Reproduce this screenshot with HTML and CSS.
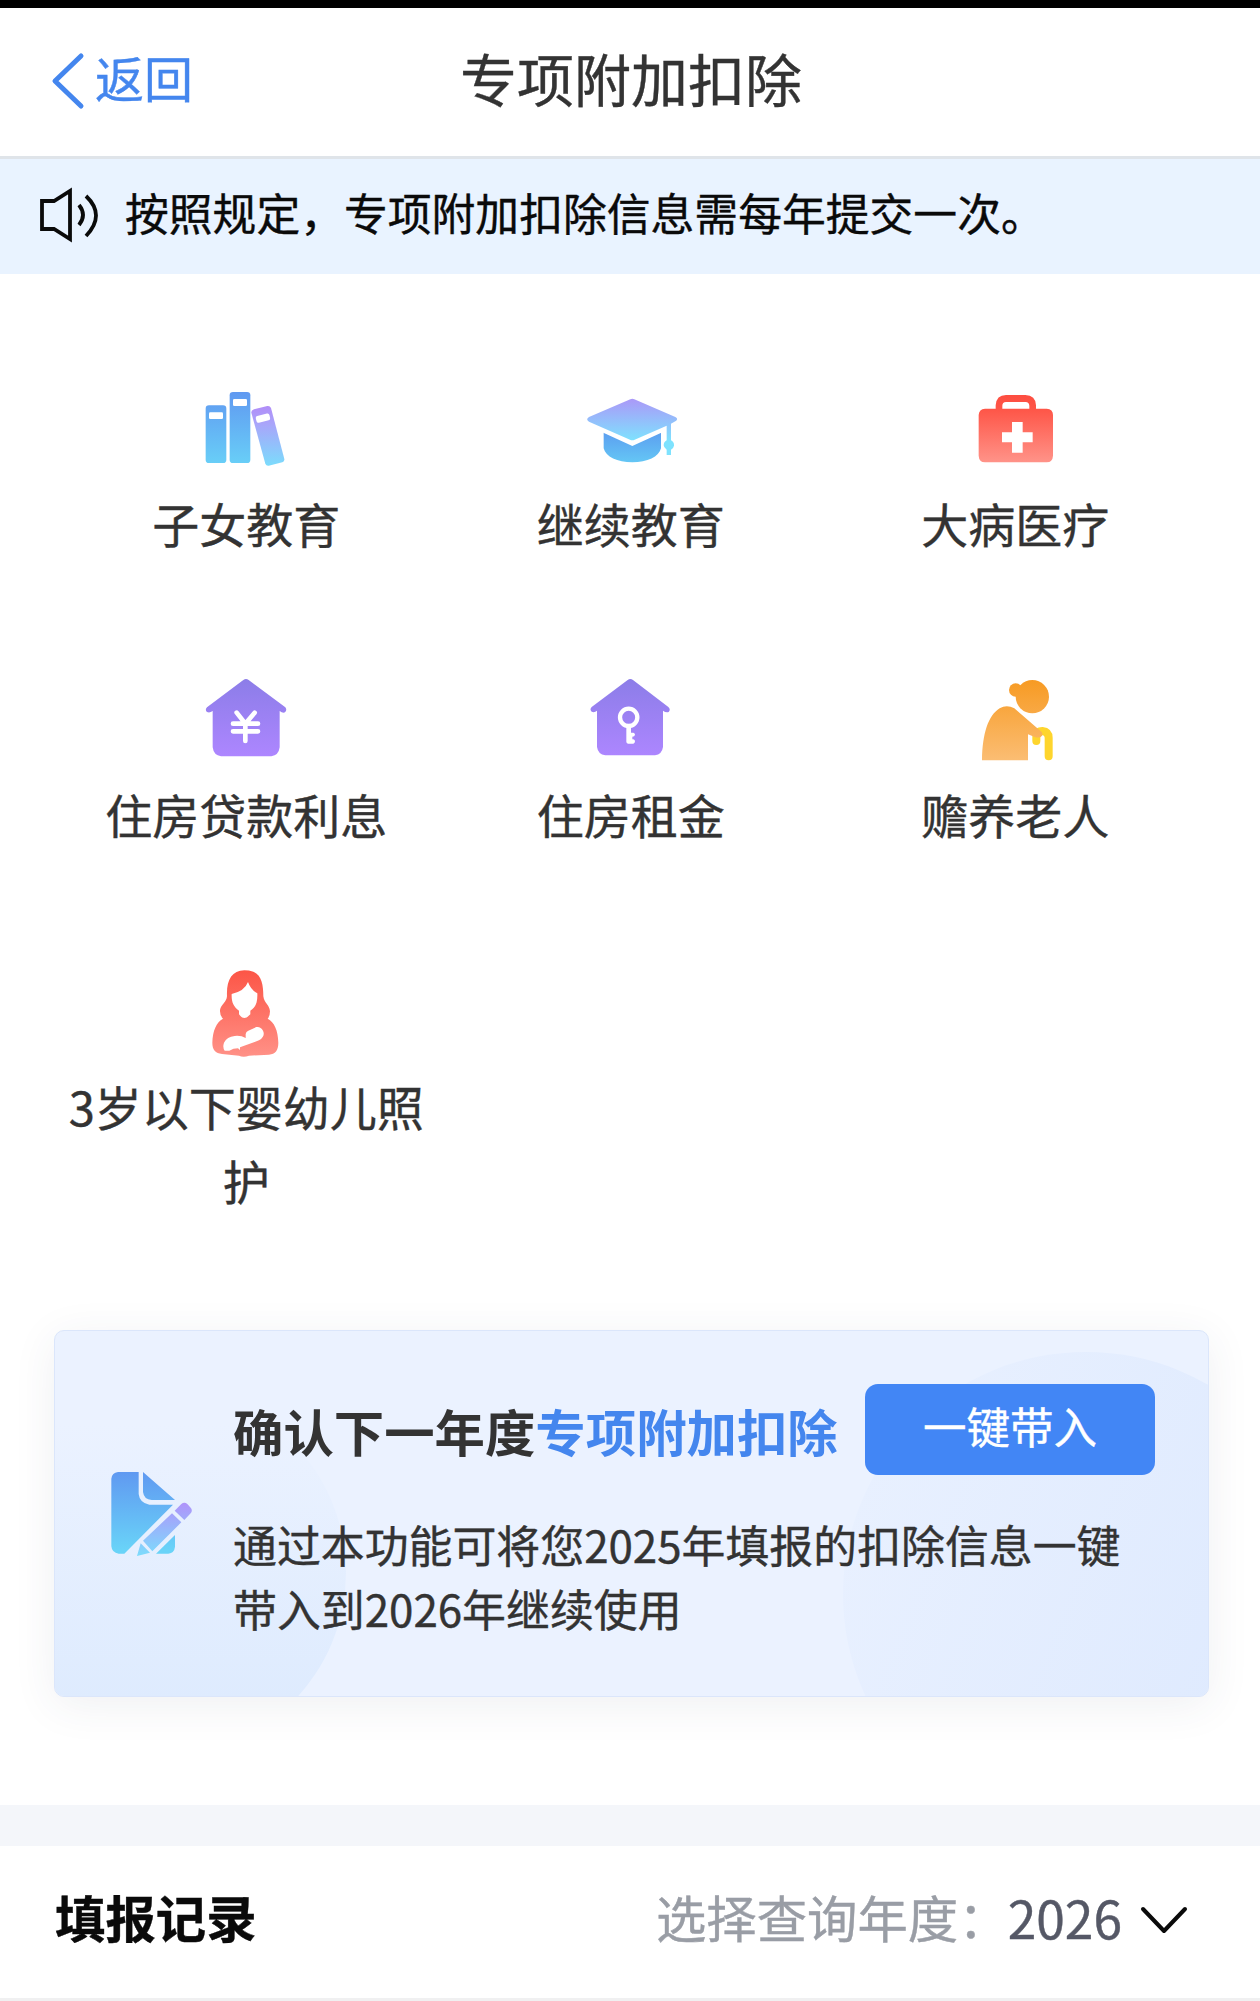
FILE: index.html
```html
<!DOCTYPE html>
<html lang="zh-CN">
<head>
<meta charset="utf-8">
<title>专项附加扣除</title>
<link rel="stylesheet" href="styles.css">
</head>
<body>
<svg class="defs" width="0" height="0" aria-hidden="true">
  <defs>
    <linearGradient id="sky" gradientUnits="userSpaceOnUse" x1="0" y1="66" x2="0" y2="300"><stop offset="0" stop-color="#6099f1"/><stop offset="1" stop-color="#69d3f8"/></linearGradient>
    <linearGradient id="lilac" gradientUnits="userSpaceOnUse" x1="0" y1="108" x2="0" y2="288"><stop offset="0" stop-color="#b18df8"/><stop offset=".3" stop-color="#a9a5fa"/><stop offset="1" stop-color="#7bdcfc"/></linearGradient>
    <linearGradient id="cap" gradientUnits="userSpaceOnUse" x1="0" y1="86" x2="0" y2="212"><stop offset="0" stop-color="#ab98f8"/><stop offset="1" stop-color="#7ee2fe"/></linearGradient>
    <linearGradient id="capBase" gradientUnits="userSpaceOnUse" x1="0" y1="186" x2="0" y2="276"><stop offset="0" stop-color="#5c9ef0"/><stop offset="1" stop-color="#64c6f5"/></linearGradient>
    <linearGradient id="red" gradientUnits="userSpaceOnUse" x1="0" y1="70" x2="0" y2="290"><stop offset="0" stop-color="#fd4c3f"/><stop offset=".22" stop-color="#fe5648"/><stop offset="1" stop-color="#ff988e"/></linearGradient>
    <linearGradient id="rose" gradientUnits="userSpaceOnUse" x1="0" y1="60" x2="0" y2="320"><stop offset="0" stop-color="#fc5546"/><stop offset="1" stop-color="#ff9187"/></linearGradient>
    <linearGradient id="violet" gradientUnits="userSpaceOnUse" x1="0" y1="56" x2="0" y2="288"><stop offset="0" stop-color="#8c7de8"/><stop offset="1" stop-color="#ad86ff"/></linearGradient>
    <linearGradient id="amber" gradientUnits="userSpaceOnUse" x1="0" y1="56" x2="0" y2="300"><stop offset="0" stop-color="#f79a22"/><stop offset="1" stop-color="#fbbd73"/></linearGradient>
    <linearGradient id="pen" gradientUnits="userSpaceOnUse" x1="0" y1="158" x2="0" y2="318"><stop offset="0" stop-color="#b093fa"/><stop offset="1" stop-color="#7cdcfc"/></linearGradient>
    <linearGradient id="fadeDown" x1="0" y1="0" x2="0" y2="1"><stop offset=".1" stop-color="#deebfe" stop-opacity="0"/><stop offset=".85" stop-color="#deebfe"/></linearGradient>
    <linearGradient id="fadeSide" x1="0" y1=".3" x2="1" y2=".7"><stop offset="0" stop-color="#dde9fe" stop-opacity=".2"/><stop offset="1" stop-color="#dde9fe"/></linearGradient>
  </defs>
</svg>

<div class="status-bar"></div>
<header class="nav">
  <a class="back"><svg width="36" height="60" viewBox="0 0 36 60"><path d="M31 5 5 30 31 55"/></svg><span>返回</span></a>
  <h1>专项附加扣除</h1>
</header>

<div class="notice">
  <svg width="62" height="56" viewBox="0 0 62 56"><path d="M3 14H15L31 4V52L15 42H3Z"/><path d="M40 18Q48 28 40 38M47 9Q67 28 47 49"/></svg>
  <span>按照规定，专项附加扣除信息需每年提交一次。</span>
</div>

<main>
  <section class="grid">
    <div class="item">
      <svg class="icon" viewBox="3 0 390 360">
        <g fill="url(#sky)"><rect x="77" y="106" width="62" height="173" rx="10"/><rect x="149" y="66" width="62" height="213" rx="10"/></g>
        <path fill="url(#lilac)" d="M222 118 262 108Q270 107 273 114L313 267Q314 274 307 277L266 287Q259 288 256 281L214 128Q213 121 222 118Z"/>
        <g fill="#fff"><rect x="87" y="127" width="42" height="20" rx="4"/><rect x="159" y="87" width="42" height="21" rx="4"/><rect x="228" y="134" width="42" height="21" rx="6" transform="rotate(-14 249 145)"/></g>
      </svg>
      <span>子女教育</span>
    </div>
    <div class="item">
      <svg class="icon" viewBox="-12 0 390 360">
        <path fill="url(#capBase)" d="M101 186 188 222 273 186V235C267 261 232 277 187 277S107 261 101 235Z"/>
        <path fill="none" stroke="#fff" stroke-width="20" d="M101 178 187 217 273 178"/>
        <path fill="url(#cap)" d="M181 88Q187 85 193 88L316 141Q327 147 316 154L303 161V211Q313 216 312 227Q311 234 303 239V255H290V239Q281 233 281 226Q281 216 290 211V167L194 209Q187 212 180 209L57 155Q46 148 57 141Z"/>
      </svg>
      <span>继续教育</span>
    </div>
    <div class="item">
      <svg class="icon" viewBox="0 0 390 360">
        <path fill="url(#red)" fill-rule="evenodd" d="M105 116H137V106Q139 75 168 75H226Q257 76 258 106V116H290Q309 117 309 135V257Q308 276 290 277H105Q87 276 86 257V135Q87 117 105 116ZM157 116H238V107Q237 96 227 96H168Q157 97 157 107ZM186 156V187H156V217H186V248H218V217H248V187H218V156Z"/>
      </svg>
      <span>大病医疗</span>
    </div>
    <div class="item">
      <svg class="icon" viewBox="3 5 390 360">
        <path fill="url(#violet)" d="M190 59Q198 53 206 59L316 141Q322 149 315 156Q308 159 299 152V261Q296 285 274 288H123Q101 285 98 261V152Q89 159 81 155Q74 148 81 141Z"/>
        <path class="cut" d="M170 157 196 190 224 157M196 190V242M159 190H234M159 213H234"/>
      </svg>
      <span>住房贷款利息</span>
    </div>
    <div class="item">
      <svg class="icon" viewBox="-12 5 390 360">
        <path fill="url(#violet)" d="M173 59Q181 53 189 59L295 140Q303 148 296 155Q288 158 279 151V260Q276 282 255 285H106Q84 282 81 260V151Q73 158 65 154Q58 147 65 140Z"/>
        <circle class="cut thin" cx="176" cy="171" r="26"/><path fill="#fff" d="M169 198H183V217H190Q195 218 195 223Q194 229 187 229V237H190Q195 238 195 243Q195 249 190 250H174Q169 249 169 244Z"/>
      </svg>
      <span>住房租金</span>
    </div>
    <div class="item">
      <svg class="icon" viewBox="0 5 390 360">
        <path fill="none" stroke="#fed52d" stroke-width="24" stroke-linecap="round" d="M259 242V224Q262 212 277 212Q296 214 296 233V288"/>
        <g fill="url(#amber)"><circle cx="247" cy="109" r="50"/><circle cx="197" cy="89" r="20"/><path d="M96 300C97 219 115 165 149 144Q170 132 193 144L275 215Q281 224 272 230Q264 233 254 230L234 222V300Z"/></g>
      </svg>
      <span>赡养老人</span>
    </div>
    <div class="item">
      <svg class="icon" viewBox="3 9 390 360">
        <path fill="url(#rose)" d="M193 61Q207 61 220 65C245 75 250 105 250 139C253 160 269 165 270 184Q270 198 263 206C283 216 294 241 295 278C295 301 286 312 267 314L207 317Q190 323 177 317L126 312C106 309 97 300 97 278C98 242 109 217 129 206Q119 196 120 180C123 163 140 157 141 138C139 91 155 62 193 61Z"/>
        <path fill="#fff" d="M204 96Q212 119 232 130C233 157 227 172 211 182V193Q202 204 193 204T177 193V182C160 171 154 155 155 132Q194 123 204 96ZM197 264V252Q198 245 205 242L229 231Q242 229 249 242Q254 253 248 261Q244 268 237 271L180 292V300L174 295Q160 295 148 302H134Q127 292 132 278Q141 260 164 258Q183 256 197 264Z"/>
      </svg>
      <span>3岁以下婴幼儿照护</span>
    </div>
  </section>

  <section class="card">
    <svg class="card-bg" viewBox="0 0 1153 366" preserveAspectRatio="none"><circle cx="106" cy="242" r="185" fill="url(#fadeDown)"/><circle cx="1031" cy="264" r="243" fill="url(#fadeSide)"/></svg>
    <svg class="card-icon" viewBox="54 54 270 276">
      <path fill="url(#sky)" d="M84 66H146V132Q149 159 178 164H249L103 311H86Q66 309 64 289V86Q66 68 84 66ZM159 66 255 150H185Q162 149 159 126ZM255 255V290Q253 309 235 311H198Z"/>
      <path fill="url(#pen)" d="M274 162Q283 155 292 162L302 173Q309 181 302 190L283 210 254 182ZM246 190 274 217 187 304 159 272ZM152 280 180 308 141 318Z"/>
    </svg>
    <div class="card-body">
      <div class="card-head"><h2>确认下一年度<em>专项附加扣除</em></h2><button type="button">一键带入</button></div>
      <p>通过本功能可将您2025年填报的扣除信息一键带入到2026年继续使用</p>
    </div>
  </section>
</main>

<section class="records">
  <h2>填报记录</h2>
  <div class="year"><span class="hint">选择查询年度：</span><span class="value">2026</span><svg width="50" height="32" viewBox="0 0 50 32"><path d="M4 4 25 26 46 4"/></svg></div>
</section>
</body>
</html>
```

FILE: styles.css
```css
* { box-sizing: border-box; }
body {
  margin: 0;
  background: #fff;
  color: #333;
  font-family: "Noto Sans CJK SC", "Noto Sans", sans-serif;
  -webkit-text-stroke: .4px;
}
h1, h2, p { margin: 0; font-weight: 400; }
svg { display: block; flex: none; }
.defs { position: absolute; }
.status-bar { height: 8px; background: #000; }

.nav {
  display: grid;
  grid-template-columns: 1fr auto 1fr;
  align-items: center;
  height: 151px;
  padding: 0 0 11px 50px;
  border-bottom: 3px solid #dfe4e9;
}
.nav h1 { font-size: 57px; line-height: 80px; margin-left: -48px; }
.back { display: flex; align-items: center; gap: 9px; color: #4486ee; font-size: 49px; line-height: 70px; }
.back svg { margin-top: 9px; }
.back path { fill: none; stroke: #4486ee; stroke-width: 5; stroke-linecap: round; stroke-linejoin: round; }

.notice {
  display: flex;
  align-items: center;
  gap: 24px;
  height: 115px;
  padding: 0 0 9px 39px;
  background: #e9f3ff;
  color: #0a0a0a;
  font-size: 43.8px;
  line-height: 64px;
}
.notice svg { margin-top: 5px; }
.notice path { fill: none; stroke: #0a0a0a; stroke-width: 3.8; }

.grid {
  display: grid;
  grid-template-columns: repeat(3, 384.5px);
  grid-auto-rows: 291.5px;
  height: 960px;
  padding: 0 54px;
  margin-top: 96px;
}
.item { display: flex; flex-direction: column; align-items: center; font-size: 47px; line-height: 74px; text-align: center; }
.item span { width: 370px; margin-top: -4.5px; }
.icon { width: 130px; height: 120px; }
.cut { fill: none; stroke: #fff; stroke-width: 14; stroke-linecap: round; stroke-linejoin: round; }
.cut.thin { stroke-width: 13; }

.card {
  position: relative;
  display: flex;
  height: 367px;
  margin: 0 51px 0 54px;
  padding: 53px 53px 0 53px;
  border: 1px solid #dbe6fb;
  border-radius: 10px;
  background: #ebf2ff;
  box-shadow: 0 8px 44px rgba(50, 60, 90, .08);
}
.card-bg { position: absolute; inset: 0; width: 100%; height: 100%; border-radius: 9px; }
.card-icon { position: relative; width: 90px; height: 92px; margin-top: 84px; }
.card-body { position: relative; flex: 1; margin-left: 35px; }
.card-head { display: flex; justify-content: space-between; height: 91px; }
.card h2 { font-size: 50.4px; line-height: 94px; font-weight: 700; white-space: nowrap; -webkit-text-stroke: 0; }
.card em { color: #4486ee; font-style: normal; }
.card button {
  width: 290px;
  height: 91px;
  padding: 0 0 8px;
  border: 0;
  border-radius: 13px;
  background: #4286f5;
  color: #fff;
  font: 43.5px/60px "Noto Sans CJK SC", sans-serif;
}
.card p { width: 900px; margin-top: 36.5px; font-size: 43.9px; line-height: 64px; }

.records {
  display: flex;
  align-items: center;
  justify-content: space-between;
  height: 196px;
  margin-top: 108px;
  padding: 0 71px 11px 55px;
  border-top: 41px solid #f4f6fa;
  border-bottom: 3px solid #f0f0f1;
}
.records h2 { color: #0a0a0a; font-size: 50.4px; font-weight: 700; }
.year { display: flex; align-items: center; font-size: 50.4px; line-height: 72px; }
.hint { color: #999da5; margin-right: -1px; }
.value { color: #555866; font-size: 51.5px; margin-right: 17px; }
.year svg { margin-top: 8px; }
.year path { fill: none; stroke: #0a0a0a; stroke-width: 4; stroke-linecap: round; stroke-linejoin: round; }
```
